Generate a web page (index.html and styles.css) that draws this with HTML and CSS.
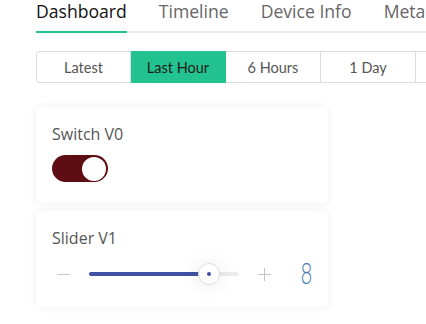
FILE: index.html
```html
<!DOCTYPE html>
<html>
<head>
<meta charset="utf-8">
<link rel="stylesheet" href="styles.css">
</head>
<body>
<div class="page">
  <nav class="tabs">
    <div class="tab active">Dashboard</div>
    <div class="tab">Timeline</div>
    <div class="tab">Device Info</div>
    <div class="tab">Metadata</div>
  </nav>
  <div class="ranges">
    <div class="range">Latest</div>
    <div class="range on">Last Hour</div>
    <div class="range">6 Hours</div>
    <div class="range">1 Day</div>
    <div class="range">1 Week</div>
  </div>
  <div class="card">
    <div class="title">Switch V0</div>
    <div class="toggle"><div class="knob"></div></div>
  </div>
  <div class="card">
    <div class="title">Slider V1</div>
    <div class="slider-row">
      <div class="minus"></div>
      <div class="track">
        <div class="fill" style="width:80%"></div>
        <div class="thumb" style="left:80%"><div class="dot"></div></div>
      </div>
      <div class="plus"></div>
      <div class="value">8</div>
    </div>
  </div>
</div>
</body>
</html>
```
FILE: styles.css
```css
html, body { margin: 0; padding: 0; background: #fff; overflow: hidden; }
body { width: 426px; height: 324px; }
.page { padding-left: 36px; width: 600px; }
.tabs {
  display: flex; gap: 32px; height: 31px;
  border-bottom: 2px solid #ececec;
  font-family: "Open Sans", sans-serif; font-size: 17.6px;
}
.tab { color: #666; line-height: 22px; height: 31px; box-sizing: border-box; flex-shrink: 0; }
.tab.active { color: #111; border-bottom: 2px solid #22c38e; height: 33px; }
.ranges {
  display: flex; margin-top: 18px; height: 32px;
  font-family: Lato, sans-serif; font-size: 14.5px;
}
.range {
  width: 95px; flex-shrink: 0; box-sizing: border-box; border: 1px solid #dcdcdc; border-left: none;
  display: flex; align-items: center; justify-content: center; color: #555;
}
.range:first-child { border-left: 1px solid #dcdcdc; border-radius: 3px 0 0 3px; }
.range.on { background: #22c38e; border-color: #22c38e; color: #1a1a1a; }
.card {
  width: 292px; box-sizing: border-box; background: #fff; border-radius: 5px;
  box-shadow: 0 0 8px rgba(0,0,0,0.07);
  padding: 16px 16px 0 16px; height: 96px;
}
.ranges + .card { margin-top: 24px; }
.card + .card { margin-top: 8px; }
.title { font-family: "Open Sans", sans-serif; font-size: 16px; color: #555; line-height: 22px; }
.toggle {
  margin-top: 10px; width: 56px; height: 27px; border-radius: 14px; background: #5e0d12;
  display: flex; align-items: center; justify-content: flex-end; padding-right: 2px; box-sizing: border-box;
}
.knob { width: 24px; height: 24px; border-radius: 50%; background: #fff; }
.slider-row { display: flex; align-items: center; margin-top: 10px; height: 30px; }
.minus { flex-shrink: 0; width: 13px; height: 1px; background: #c8c8c8; margin-left: 5px; }
.track { flex-shrink: 0; position: relative; width: 150px; height: 4px; background: #ececec; margin-left: 19px; border-radius: 2px; }
.fill { height: 4px; background: #3f51a5; border-radius: 2px; }
.thumb {
  position: absolute; top: 50%; width: 22px; height: 22px; margin: -11px 0 0 -11px;
  border-radius: 50%; background: #fff; border: 1px solid #ddd; box-sizing: border-box;
  box-shadow: 0 0 14px 8px rgba(0,0,0,0.03);
  display: flex; align-items: center; justify-content: center;
}
.dot { width: 4px; height: 4px; border-radius: 50%; background: #3f51a5; }
.plus { flex-shrink: 0; position: relative; width: 13px; height: 13px; margin-left: 19px; }
.plus::before, .plus::after { content: ""; position: absolute; background: #c0c0c0; }
.plus::before { left: 0; right: 0; top: 6px; height: 1px; }
.plus::after { top: 0; bottom: 0; left: 6px; width: 1px; }
.value {
  margin-left: 29px; font-family: "DejaVu Sans", sans-serif; font-weight: 200; font-size: 29px;
  line-height: 30px; color: #4a7fb5; transform: scaleX(0.7); transform-origin: left center;
}
```
